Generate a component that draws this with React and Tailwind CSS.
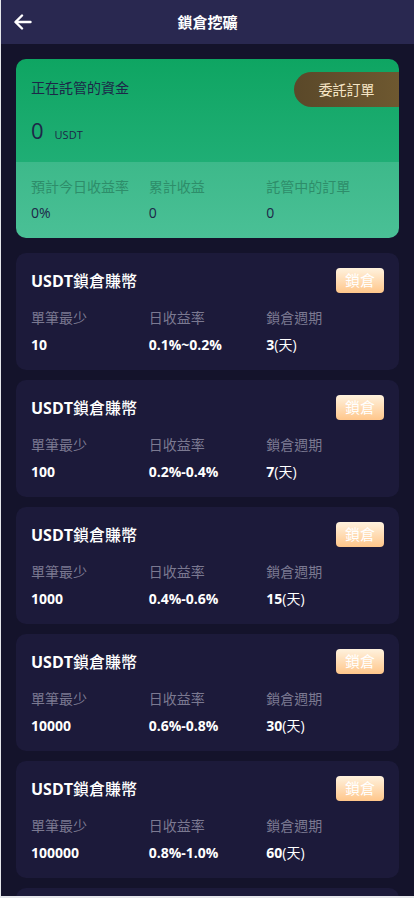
import React from 'react';

const products = [
  { min: '10', rate: '0.1%~0.2%', days: '3' },
  { min: '100', rate: '0.2%-0.4%', days: '7' },
  { min: '1000', rate: '0.4%-0.6%', days: '15' },
  { min: '10000', rate: '0.6%-0.8%', days: '30' },
  { min: '100000', rate: '0.8%-1.0%', days: '60' },
  { min: '500000', rate: '1.0%-1.2%', days: '90' },
];

function ArrowLeft() {
  return (
    <svg width="18" height="16" viewBox="0 0 18 16" fill="none" stroke="white" strokeWidth="2.4" strokeLinecap="round" strokeLinejoin="round">
      <path d="M16.5 8H2" />
      <path d="M8 1.5L1.5 8L8 14.5" />
    </svg>
  );
}

function ProductCard({ item }) {
  return (
    <div className="bg-[#1c1a3a] rounded-[10px] px-[15px] pt-[15px] pb-[16px]">
      <div className="flex justify-between items-center h-[25px]">
        <h3 className="text-[16px] font-bold text-white">
          USDT<span className="font-medium">鎖倉賺幣</span>
        </h3>
        <button className="w-[48px] h-[25px] rounded-[4px] bg-gradient-to-b from-[#fff2de] to-[#ffc68a] text-white text-[15px] leading-none">
          鎖倉
        </button>
      </div>
      <div className="grid grid-cols-3 mt-[15px]">
        <p className="text-[14px] leading-[19px] text-[#7b7991]">單筆最少</p>
        <p className="text-[14px] leading-[19px] text-[#7b7991]">日收益率</p>
        <p className="text-[14px] leading-[19px] text-[#7b7991]">鎖倉週期</p>
        <p className="text-[14px] leading-[19px] font-bold text-white mt-[8px]">{item.min}</p>
        <p className="text-[14px] leading-[19px] font-bold text-white mt-[8px]">{item.rate}</p>
        <p className="text-[14px] leading-[19px] font-bold text-white mt-[8px]">
          {item.days}<span className="font-normal">(天)</span>
        </p>
      </div>
    </div>
  );
}

export default function App() {
  return (
    <div className="bg-[#e5e7eb] h-[898px] pl-px overflow-hidden" style={{ fontFamily: '"Open Sans", "Noto Sans CJK TC", sans-serif' }}>
      <div className="h-[896px] bg-[#14132b] overflow-hidden">
        <header className="h-[44px] bg-[#292850] flex items-center relative">
          <button className="absolute left-[13px] top-[14px]">
            <ArrowLeft />
          </button>
          <h1 className="w-full text-center text-[15px] font-bold text-white">鎖倉挖礦</h1>
        </header>

        <div className="px-[15px] pt-[15px] space-y-[15px]">
          <div className="rounded-[10px] overflow-hidden">
            <div className="bg-gradient-to-b from-[#0ea562] to-[#1fae75] h-[103px] pl-[15px] pt-[13px] relative">
              <p className="text-[14px] leading-[32px] text-[#1d2748]">正在託管的資金</p>
              <div className="flex items-baseline mt-[10px]">
                <span className="text-[22px] text-[#1d2748]">0</span>
                <span className="text-[11px] text-[#1d2748] ml-[11px]">USDT</span>
              </div>
              <button className="absolute right-0 top-[13px] w-[105px] h-[35px] rounded-l-full bg-gradient-to-r from-[#5a4829] to-[#6e5830] text-[#f6e6c6] text-[14px]">
                委託訂單
              </button>
            </div>
            <div className="bg-gradient-to-b from-[#3db98a] to-[#4ac096] h-[76px] px-[15px] pt-[15px] grid grid-cols-3">
              <div>
                <p className="text-[14px] leading-[19px] text-[#2e8d6a]">預計今日收益率</p>
                <p className="text-[14px] leading-[19px] text-[#1d2748] mt-[7px]">0%</p>
              </div>
              <div>
                <p className="text-[14px] leading-[19px] text-[#2e8d6a]">累計收益</p>
                <p className="text-[14px] leading-[19px] text-[#1d2748] mt-[7px]">0</p>
              </div>
              <div>
                <p className="text-[14px] leading-[19px] text-[#2e8d6a]">託管中的訂單</p>
                <p className="text-[14px] leading-[19px] text-[#1d2748] mt-[7px]">0</p>
              </div>
            </div>
          </div>

          <div className="space-y-[10px]">
            {products.map((p) => (
              <ProductCard key={p.min} item={p} />
            ))}
          </div>
        </div>
      </div>
    </div>
  );
}
